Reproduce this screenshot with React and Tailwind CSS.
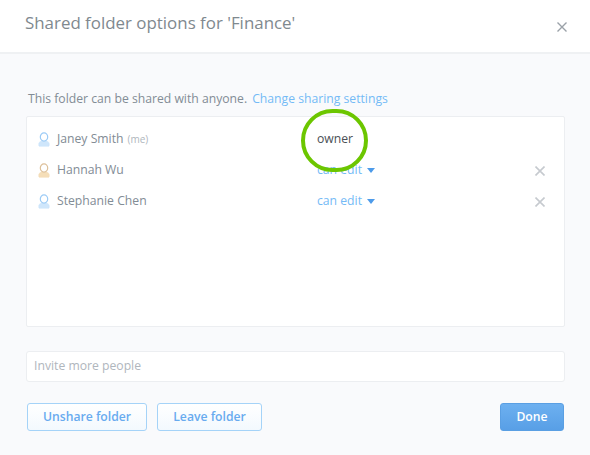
const F = "font-['Open_Sans',sans-serif]";

function Person({ light, dark }) {
  return (
    <svg width="12" height="15" viewBox="0 0 12 15" className="shrink-0" fill="none">
      <path d="M0.8 13.4V11.6C0.8 10.2 2.4 9.6 4 8.8H8C9.6 9.6 11.2 10.2 11.2 11.6V13.4C11.2 14 10.8 14.3 10.3 14.3H1.7C1.2 14.3 0.8 14 0.8 13.4Z" fill={light} stroke={light} strokeWidth="0.6" />
      <ellipse cx="6" cy="5" rx="3.7" ry="4.2" fill="#ffffff" stroke={dark} strokeWidth="1.2" />
    </svg>
  );
}

function X({ size, color, stroke }) {
  return (
    <svg width={size} height={size} viewBox="0 0 10 10" className="shrink-0">
      <path d="M0.5 0.5L9.5 9.5M9.5 0.5L0.5 9.5" stroke={color} strokeWidth={stroke} />
    </svg>
  );
}

function Row({ light, dark, name, me, role }) {
  return (
    <div className="flex h-[31px] items-center pl-[11px] pr-[19px]">
      <div className="flex w-[279px] items-center gap-[7px]">
        <Person light={light} dark={dark} />
        <span className="text-[12.2px] text-[#828c95]">
          {name}
          {me && <span className="ml-[4px] text-[10px] text-[#b0b6bd]">(me)</span>}
        </span>
      </div>
      {role ? (
        <span className="text-[12.2px] text-[#4a4f55]">{role}</span>
      ) : (
        <>
          <span className="flex items-center gap-[5px] text-[12.2px] text-[#74baf6]">
            can edit
            <span className="h-0 w-0 border-x-[4px] border-t-[5px] border-x-transparent border-t-[#4d9bea]" />
          </span>
          <span className="ml-auto">
            <X size={10} color="#c6cacf" stroke={1.6} />
          </span>
        </>
      )}
    </div>
  );
}

export default function App() {
  return (
    <div className={`${F} relative flex h-[455px] w-[590px] flex-col overflow-hidden bg-[#f9fafc]`}>
      <header className="flex h-[54px] shrink-0 items-center justify-between border-b-2 border-[#eff1f3] bg-white pl-[25px] pr-[23px]">
        <h1 className="mb-[6px] text-[16.9px] font-normal text-[#7f898f]">Shared folder options for 'Finance'</h1>
        <span className="mt-[2px]">
          <X size={10} color="#9aa1a8" stroke={1.4} />
        </span>
      </header>

      <main className="flex flex-1 flex-col pl-[26px] pr-[25px] pt-[36px]">
        <p className="pl-[2px] text-[12.2px] leading-[18px] text-[#828c95]">
          This folder can be shared with anyone.
          <span className="ml-[5px] text-[#74baf6]">Change sharing settings</span>
        </p>
        <section className="mt-[8px] h-[211px] rounded-[2px] border border-[#eceef1] bg-white pt-[7px]">
          <Row light="#cfe6fb" dark="#9ccbf6" name="Janey Smith" me role="owner" />
          <Row light="#f5deb8" dark="#ddc09a" name="Hannah Wu" />
          <Row light="#cfe6fb" dark="#9ccbf6" name="Stephanie Chen" />
        </section>
        <div className="mt-[24px] flex h-[31px] items-center rounded-[3px] border border-[#eceef1] bg-white pl-[7px] text-[12.2px] text-[#b0b6bd]">
          Invite more people
        </div>
        <div className="mt-[21px] flex items-center pl-[1px] pr-[1px]">
          <button className="h-[28px] w-[120px] rounded-[3px] border border-[#a5d3f8] bg-gradient-to-b from-white to-[#f3f9fe] text-[12.2px] font-semibold text-[#68abef]">
            Unshare folder
          </button>
          <button className="ml-[10px] h-[28px] w-[105px] rounded-[3px] border border-[#a5d3f8] bg-gradient-to-b from-white to-[#f3f9fe] text-[12.2px] font-semibold text-[#68abef]">
            Leave folder
          </button>
          <button className="ml-auto h-[28px] w-[64px] rounded-[3px] border border-[#5a9fe3] bg-gradient-to-b from-[#6db0f0] to-[#589fe6] text-[12.2px] font-semibold text-white">
            Done
          </button>
        </div>
      </main>

      <div className="absolute left-[301px] top-[109px] h-[63px] w-[67px] rounded-full border-[4.5px] border-[#6cc600]" />
    </div>
  );
}
